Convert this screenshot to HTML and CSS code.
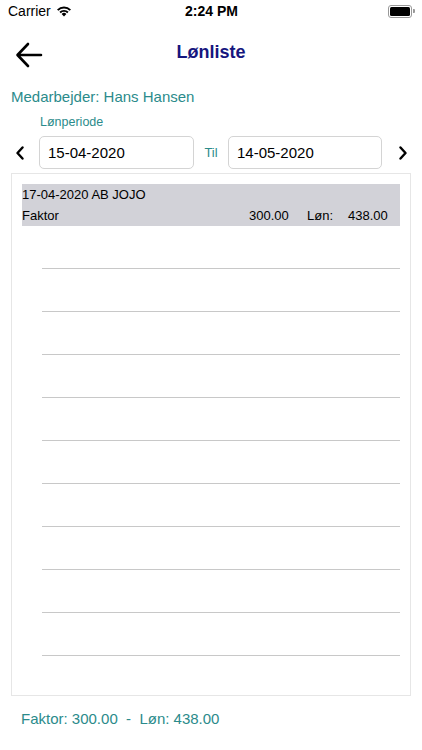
FILE: index.html
```html
<!DOCTYPE html>
<html lang="da">
<head>
    <meta charset="UTF-8">
    <meta name="viewport" content="width=device-width, initial-scale=1.0">
    <title>Lønliste</title>
    <link rel="stylesheet" href="styles.css">
</head>
<body>
    <!-- Status bar -->
    <div class="status-bar">
        <div class="carrier">
            Carrier
            <svg class="wifi" width="16" height="12" viewBox="0 0 16 12">
                <path d="M8 11.5 L5.6 9 A3.4 3.4 0 0 1 10.4 9 Z" fill="#000"/>
                <path d="M3.4 6.8 A6.5 6.5 0 0 1 12.6 6.8 L11.2 8.2 A4.5 4.5 0 0 0 4.8 8.2 Z" fill="#000"/>
                <path d="M1 4.4 A10 10 0 0 1 15 4.4 L13.6 5.8 A8 8 0 0 0 2.4 5.8 Z" fill="#000"/>
            </svg>
        </div>
        <div class="clock">2:24 PM</div>
        <div class="battery">
            <span class="battery-body"><span class="battery-level"></span></span>
            <span class="battery-tip"></span>
        </div>
    </div>

    <!-- Navigation -->
    <header class="nav">
        <svg class="back" width="28" height="26" viewBox="0 0 28 26">
            <path d="M26 13 H3 M13 2 L2.5 13 L13 24" fill="none" stroke="#000" stroke-width="2.6" stroke-linecap="round" stroke-linejoin="round"/>
        </svg>
        <h1 class="title">Lønliste</h1>
    </header>

    <main class="content">
        <p class="employee">Medarbejder: Hans Hansen</p>
        <p class="period-label">Lønperiode</p>

        <div class="period">
            <span class="chevron">
                <svg width="10" height="14" viewBox="0 0 10 14"><path d="M7.5 1.5 L2.5 7 L7.5 12.5" fill="none" stroke="#000" stroke-width="2.4" stroke-linecap="round" stroke-linejoin="round"/></svg>
            </span>
            <div class="date-field">15-04-2020</div>
            <span class="til">Til</span>
            <div class="date-field">14-05-2020</div>
            <span class="chevron">
                <svg width="10" height="14" viewBox="0 0 10 14"><path d="M2.5 1.5 L7.5 7 L2.5 12.5" fill="none" stroke="#000" stroke-width="2.4" stroke-linecap="round" stroke-linejoin="round"/></svg>
            </span>
        </div>

        <!-- Salary list -->
        <div class="list">
            <div class="entry">
                <div class="entry-line">17-04-2020 AB JOJO</div>
                <div class="entry-line entry-values">
                    <span class="entry-name">Faktor</span>
                    <span class="entry-factor">300.00</span>
                    <span class="entry-label">Løn:</span>
                    <span class="entry-amount">438.00</span>
                </div>
            </div>
            <div class="empty-row"></div>
            <div class="empty-row"></div>
            <div class="empty-row"></div>
            <div class="empty-row"></div>
            <div class="empty-row"></div>
            <div class="empty-row"></div>
            <div class="empty-row"></div>
            <div class="empty-row"></div>
            <div class="empty-row"></div>
            <div class="empty-row"></div>
        </div>

        <p class="totals">Faktor: 300.00&nbsp; - &nbsp;Løn: 438.00</p>
    </main>
</body>
</html>
```

FILE: styles.css
```css
body {
    margin: 0;
    padding: 0;
    width: 422px;
    height: 750px;
    background-color: #fff;
    color: #000;
    font-family: "Liberation Sans", Arial, sans-serif;
    overflow: hidden;
}
p {
    margin: 0;
}
/* Status bar */
.status-bar {
    height: 22px;
    display: flex;
    align-items: center;
    justify-content: space-between;
    padding: 0 7px 0 8px;
    font-size: 14px;
}
.carrier {
    width: 120px;
    display: flex;
    align-items: center;
    gap: 5px;
}
.clock {
    font-weight: bold;
}
.battery {
    width: 120px;
    display: flex;
    align-items: center;
    justify-content: flex-end;
}
.battery-body {
    width: 20px;
    height: 9px;
    border: 1px solid #999;
    border-radius: 3px;
    padding: 1px;
    display: flex;
}
.battery-level {
    flex: 1;
    background-color: #000;
    border-radius: 1.5px;
}
.battery-tip {
    width: 1.5px;
    height: 4px;
    margin-left: 1px;
    background-color: #999;
    border-radius: 0 1px 1px 0;
}
/* Navigation */
.nav {
    height: 66px;
    display: flex;
    align-items: center;
    justify-content: center;
    position: relative;
}
.back {
    position: absolute;
    left: 15px;
    top: 20px;
}
.title {
    margin: 0 0 6px 0;
    font-size: 18px;
    font-weight: bold;
    color: #16167e;
}
/* Content */
.employee {
    margin-left: 11px;
    font-size: 15px;
    line-height: 18px;
    color: #2b8b8b;
}
.period-label {
    margin: 9px 0 0 40px;
    font-size: 12.5px;
    line-height: 14px;
    color: #2b8b8b;
}
.period {
    margin-top: 7px;
    display: grid;
    grid-template-columns: 39px 155px 34px 154px 1fr;
    align-items: center;
    height: 33px;
}
.chevron {
    display: flex;
    justify-content: center;
    padding-left: 1px;
}
.date-field {
    height: 31px;
    border: 1px solid #d4d4d4;
    border-radius: 5px;
    padding-left: 8px;
    font-size: 15px;
    line-height: 31px;
}
.til {
    text-align: center;
    font-size: 13px;
    color: #2b8b8b;
}
/* Salary list */
.list {
    margin: 4px 11px 0 11px;
    height: 511px;
    border: 1px solid #e6e6e6;
    padding: 10px 10px 0 10px;
}
.entry {
    background-color: #d2d2d8;
    height: 42px;
    font-size: 13px;
}
.entry-line {
    height: 21px;
    line-height: 21px;
}
.entry-values {
    display: flex;
}
.entry-name {
    flex: 1;
}
.entry-factor {
    width: 58px;
}
.entry-label {
    width: 41px;
}
.entry-amount {
    width: 52px;
}
.empty-row {
    height: 42px;
    margin-left: 20px;
    border-bottom: 1px solid #c8c8c8;
}
.totals {
    margin: 14px 0 0 21px;
    font-size: 15px;
    line-height: 18px;
    color: #2b8b8b;
}
```
